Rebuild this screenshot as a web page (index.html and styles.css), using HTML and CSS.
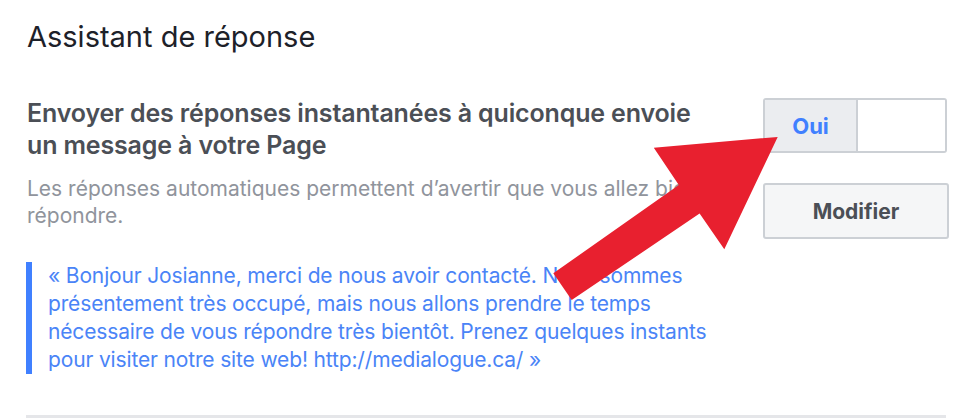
FILE: index.html
```html
<!DOCTYPE html>
<html lang="fr">
<head>
<meta charset="utf-8">
<title>Assistant de réponse</title>
<link rel="stylesheet" href="styles.css">
</head>
<body>
<div class="page">
  <h1 class="title">Assistant de réponse</h1>
  <div class="row">
    <div class="main">
      <h2 class="heading">Envoyer des réponses instantanées à quiconque envoie un message à votre Page</h2>
      <p class="desc">Les réponses automatiques permettent d’avertir que vous allez bientôt répondre.</p>
      <blockquote class="quote">« Bonjour Josianne, merci de nous avoir contacté. Nous sommes présentement très occupé, mais nous allons prendre le temps nécessaire de vous répondre très bientôt. Prenez quelques instants pour visiter notre site web! http://medialogue.ca/ »</blockquote>
    </div>
    <div class="side">
      <div class="toggle">
        <span class="toggle-on">Oui</span>
        <span class="toggle-off"></span>
      </div>
      <button class="btn">Modifier</button>
    </div>
  </div>
  <div class="sep"></div>
</div>
<svg class="arrow" width="980" height="418" viewBox="0 0 980 418">
  <polygon points="777.7,136.9 653.8,147.8 678.8,185 553.3,273.3 571.7,300 699.6,213.6 724.3,249.2" fill="#e8202f"/>
</svg>
</body>
</html>
```
FILE: styles.css
```css
html, body {
  margin: 0;
  padding: 0;
  background: #ffffff;
  overflow: hidden;
}
body {
  width: 980px;
  height: 418px;
  position: relative;
  font-family: Inter, "Noto Sans", sans-serif;
}
.page {
  padding: 0 31px 0 27px;
}
.title {
  margin: 0;
  padding-top: 20px;
  font-size: 29px;
  line-height: 34px;
  font-weight: 400;
  color: #1d2129;
}
.row {
  display: flex;
  justify-content: space-between;
  margin-top: 43px;
}
.main {
  width: 725px;
}
.heading {
  margin: 0;
  font-size: 25px;
  line-height: 32px;
  font-weight: 600;
  letter-spacing: -0.15px;
  color: #4b4f56;
  max-width: 690px;
}
.desc {
  margin: 14px 0 0;
  font-size: 21px;
  line-height: 27px;
  color: #90949c;
}
.quote {
  margin: 33px 0 0 -1px;
  border-left: 6px solid #4080ff;
  padding: 0 0 0 16px;
  font-size: 21px;
  line-height: 28px;
  letter-spacing: -0.15px;
  color: #4a84f7;
  width: 680px;
}
.side {
  width: 186px;
  display: flex;
  flex-direction: column;
  gap: 30px;
  padding-top: 1px;
}
.toggle {
  display: flex;
  height: 55px;
  box-sizing: border-box;
  border: 2px solid #ccd0d5;
  border-radius: 3px;
  overflow: hidden;
  width: 184px;
}
.toggle-on {
  width: 91px;
  background: #ebedf0;
  border-right: 2px solid #ccd0d5;
  color: #4080ff;
  font-weight: 700;
  font-size: 22px;
  display: flex;
  align-items: center;
  justify-content: center;
}
.toggle-off {
  flex: 1;
  background: #ffffff;
}
.btn {
  height: 56px;
  box-sizing: border-box;
  border: 2px solid #ccd0d5;
  border-radius: 3px;
  background: #f5f6f7;
  color: #4b4f56;
  font-family: inherit;
  font-weight: 700;
  font-size: 21px;
  padding: 0;
  width: 186px;
}
.sep {
  margin-top: 41px;
  height: 3px;
  background: #e5e6e9;
  margin-right: 3px;
  margin-left: -1px;
}
.arrow {
  position: absolute;
  left: 0;
  top: 0;
  pointer-events: none;
}
```
